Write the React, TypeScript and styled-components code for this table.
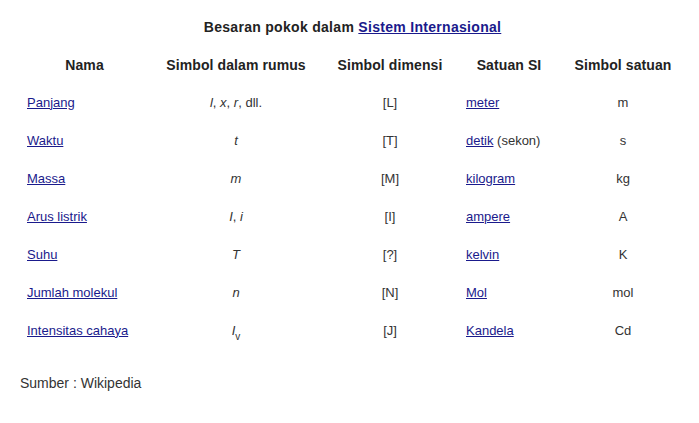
import React from "react";
import styled, { createGlobalStyle } from "styled-components";

const Global = createGlobalStyle`
  html, body { margin: 0; padding: 0; background: #fff; }
  body { font-family: "Liberation Sans", Arial, sans-serif; font-size: 13px; color: #333; }
`;

const Page = styled.div`
  padding: 20px 0 0 19px;
  width: 668px;
`;

const Table = styled.table`
  border-collapse: collapse;
  table-layout: fixed;
  width: 667px;
`;

const Caption = styled.caption`
  font-weight: bold;
  font-size: 14px;
  letter-spacing: 0.3px;
  line-height: 15px;
  padding-bottom: 12px;
  color: #222;
`;

const HeadCell = styled.th`
  height: 36px;
  padding: 0;
  font-weight: bold;
  font-size: 14px;
  letter-spacing: 0.1px;
  text-align: center;
  vertical-align: middle;
  color: #222;
  line-height: 15px;
`;

const Cell = styled.td<{ $align?: "left" | "center" }>`
  height: 38px;
  padding: 0 0 0 ${(p) => (p.$align === "left" ? "8px" : "0")};
  text-align: ${(p) => p.$align ?? "center"};
  vertical-align: middle;
  line-height: 15px;
`;

const Link = styled.a`
  color: #1a1a8c;
  text-decoration: underline;
`;

const Sym = styled.i`
  font-style: italic;
`;

const Sub = styled.sub`
  font-size: 10px;
  vertical-align: -5px;
  line-height: 0;
`;

const Source = styled.p`
  margin: 27px 0 0 1px;
  line-height: 15px;
  font-size: 14px;
`;

type Row = {
  nama: string;
  simbol: React.ReactNode;
  dim: string;
  satuan: string;
  extra?: string;
  unit: string;
};

const rows: Row[] = [
  { nama: "Panjang", simbol: <><Sym>l</Sym>, <Sym>x</Sym>, <Sym>r</Sym>, dll.</>, dim: "[L]", satuan: "meter", unit: "m" },
  { nama: "Waktu", simbol: <Sym>t</Sym>, dim: "[T]", satuan: "detik", extra: " (sekon)", unit: "s" },
  { nama: "Massa", simbol: <Sym>m</Sym>, dim: "[M]", satuan: "kilogram", unit: "kg" },
  { nama: "Arus listrik", simbol: <><Sym>I</Sym>, <Sym>i</Sym></>, dim: "[I]", satuan: "ampere", unit: "A" },
  { nama: "Suhu", simbol: <Sym>T</Sym>, dim: "[?]", satuan: "kelvin", unit: "K" },
  { nama: "Jumlah molekul", simbol: <Sym>n</Sym>, dim: "[N]", satuan: "Mol", unit: "mol" },
  { nama: "Intensitas cahaya", simbol: <><Sym>I</Sym><Sub>v</Sub></>, dim: "[J]", satuan: "Kandela", unit: "Cd" },
];

export default function App() {
  return (
    <>
      <Global />
      <Page>
        <Table>
          <Caption>
            Besaran pokok dalam <Link href="#">Sistem Internasional</Link>
          </Caption>
          <colgroup>
            <col style={{ width: 131 }} />
            <col style={{ width: 172 }} />
            <col style={{ width: 136 }} />
            <col style={{ width: 102 }} />
            <col style={{ width: 126 }} />
          </colgroup>
          <thead>
            <tr>
              <HeadCell>Nama</HeadCell>
              <HeadCell>Simbol dalam rumus</HeadCell>
              <HeadCell>Simbol dimensi</HeadCell>
              <HeadCell>Satuan SI</HeadCell>
              <HeadCell>Simbol satuan</HeadCell>
            </tr>
          </thead>
          <tbody>
            {rows.map((r) => (
              <tr key={r.nama}>
                <Cell $align="left"><Link href="#">{r.nama}</Link></Cell>
                <Cell>{r.simbol}</Cell>
                <Cell>{r.dim}</Cell>
                <Cell $align="left"><Link href="#">{r.satuan}</Link>{r.extra}</Cell>
                <Cell>{r.unit}</Cell>
              </tr>
            ))}
          </tbody>
        </Table>
        <Source>Sumber : Wikipedia</Source>
      </Page>
    </>
  );
}
